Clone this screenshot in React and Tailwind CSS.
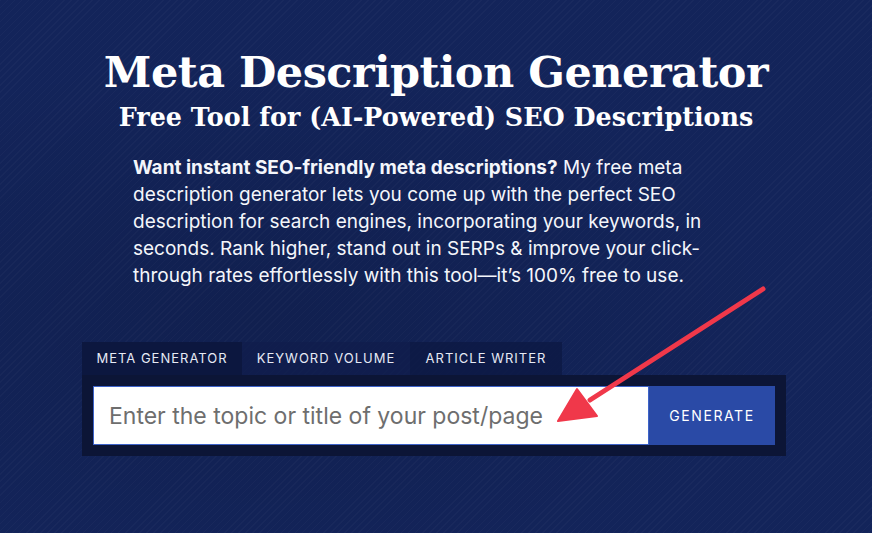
export default function App() {
  return (
    <div className="relative h-[533px] w-[872px] overflow-hidden bg-[#13245a] font-['Inter',sans-serif] text-white">
      {/* subtle pattern */}
      <div className="pointer-events-none absolute inset-0 bg-[repeating-linear-gradient(135deg,rgba(255,255,255,0.025)_0_1px,transparent_1px_5px)]" />
      <div className="pointer-events-none absolute inset-0 bg-[radial-gradient(ellipse_at_30%_60%,rgba(0,0,0,0.12),transparent_60%)]" />

      <div className="relative flex flex-col">
        <h1 className="mt-[47px] text-center font-['DejaVu_Serif',serif] text-[43px] font-bold leading-[50px] tracking-[-0.5px]">
          Meta Description Generator
        </h1>
        <h2 className="mt-[4px] text-center font-['DejaVu_Serif',serif] text-[25.4px] font-bold leading-[32px]">
          Free Tool for (AI-Powered) SEO Descriptions
        </h2>
        <p className="ml-[133px] mt-[21px] w-[575px] text-[19px] leading-[27px] text-[#f4f6fb]">
          <strong className="font-bold">Want instant SEO-friendly meta descriptions?</strong> My free meta description generator lets you come up with the perfect SEO description for search engines, incorporating your keywords, in seconds. Rank higher, stand out in SERPs &amp; improve your click-through rates effortlessly with this tool—it’s 100% free to use.
        </p>

        <div className="ml-[82px] mt-[53px] w-[704px]">
          <div className="flex h-[33px] text-[13px] tracking-[1px] text-[#e6eaf5]">
            <button className="flex h-full w-[160px] items-center justify-center bg-[#0c173f]">META GENERATOR</button>
            <button className="flex h-full w-[168px] items-center justify-center bg-[#0f1d4b]/70">KEYWORD VOLUME</button>
            <button className="flex h-full w-[152px] items-center justify-center bg-[#0d1944]/80">ARTICLE WRITER</button>
          </div>
          <div className="flex bg-[#0c1536] p-[11px]">
            <input
              className="h-[59px] flex-1 border border-[#3d63c9] bg-white px-[15px] text-[23px] text-[#333] outline-none placeholder:text-[#6e6e6e]"
              placeholder="Enter the topic or title of your post/page"
            />
            <button className="h-[59px] w-[126px] bg-[#2a4aa6] text-[14px] tracking-[1.6px] text-white">
              GENERATE
            </button>
          </div>
        </div>
      </div>

      {/* red annotation arrow */}
      <svg className="pointer-events-none absolute left-0 top-0" width="872" height="533">
        <path d="M763 289 L590 400" stroke="#f0384a" strokeWidth="5" strokeLinecap="round" />
        <polygon points="558,421 577,389 597,416" fill="#f0384a" stroke="#f0384a" strokeWidth="2" strokeLinejoin="round" />
      </svg>
    </div>
  );
}
